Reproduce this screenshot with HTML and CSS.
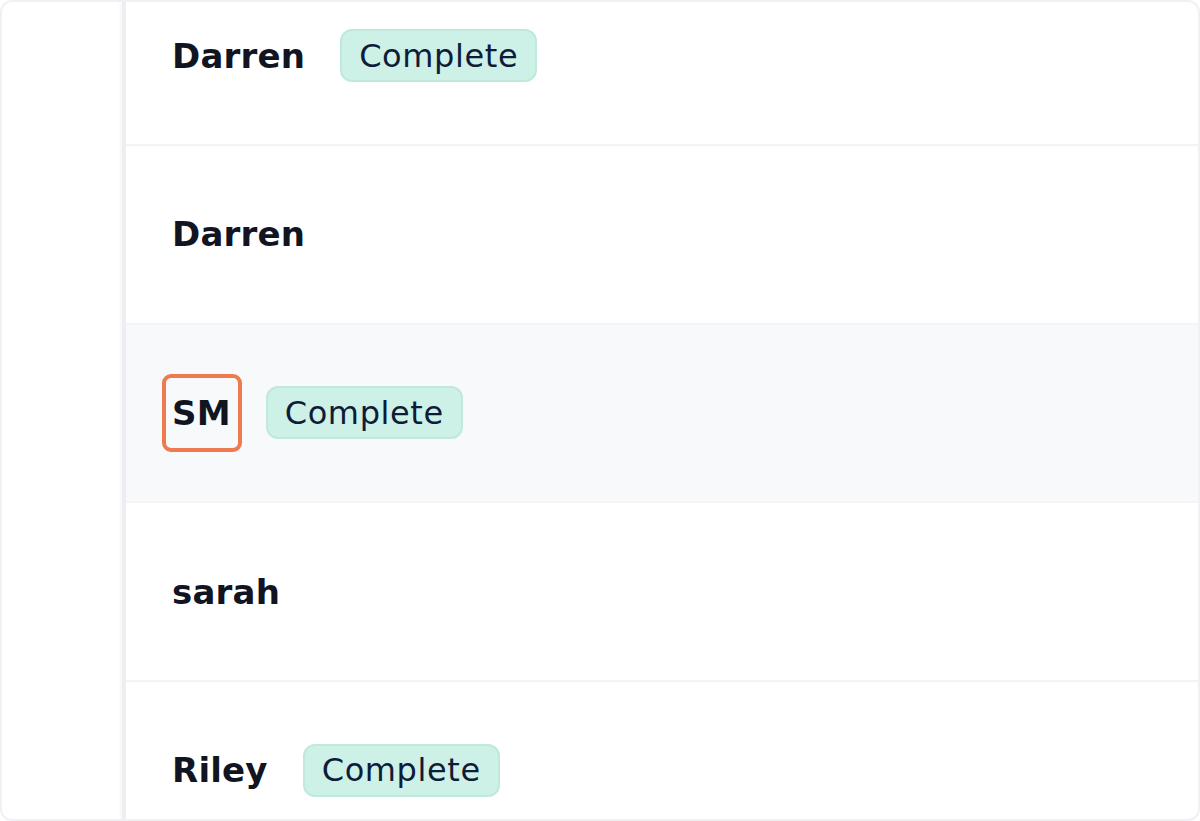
FILE: index.html
```html
<!DOCTYPE html>
<html lang="en">
<head>
<meta charset="utf-8">
<title>Responses</title>
<link rel="stylesheet" href="styles.css">
</head>
<body>
<div class="frame">
  <aside class="side"></aside>
  <main class="panel">
    <div class="rows">
      <div class="row">
        <span class="name">Darren</span>
        <span class="badge">Complete</span>
      </div>
      <div class="row">
        <span class="name">Darren</span>
      </div>
      <div class="row row-active">
        <span class="name name-marked">SM</span>
        <span class="badge">Complete</span>
      </div>
      <div class="row">
        <span class="name">sarah</span>
      </div>
      <div class="row">
        <span class="name">Riley</span>
        <span class="badge">Complete</span>
      </div>
    </div>
  </main>
</div>
</body>
</html>
```

FILE: styles.css
```css
* { box-sizing: border-box; }
html, body { margin: 0; padding: 0; background: #ffffff; }
body { font-family: "DejaVu Sans", "Liberation Sans", sans-serif; }

.frame {
  width: 1200px;
  height: 821px;
  border: 2px solid #f0f0f5;
  border-radius: 12px;
  overflow: hidden;
  display: flex;
  background: #ffffff;
}

.side {
  width: 120px;
  flex: none;
  background: #ffffff;
}

.panel {
  flex: 1;
  border-left: 4px solid #eceef2;
  box-shadow: -2px 0 3px rgba(20, 24, 40, 0.04);
  overflow: hidden;
}

.rows {
  margin-top: -34.67px;
}

.row {
  height: 178.67px;
  border-bottom: 2px solid #f3f4f6;
  display: flex;
  align-items: center;
  gap: 35px;
  padding-left: 46px;
}

.row-active { background: #f8f9fb; }

.name {
  position: relative;
  font-size: 34px;
  font-weight: 700;
  color: #111522;
  line-height: 40px;
  letter-spacing: 0.2px;
}

.name-marked::after {
  content: "";
  position: absolute;
  top: -19px;
  bottom: -19px;
  left: -10px;
  right: -11px;
  border: 4px solid #ee7b50;
  border-radius: 9px;
}

.badge {
  display: inline-flex;
  align-items: center;
  height: 53px;
  padding: 0 17px;
  border: 2px solid #bfe9dc;
  border-radius: 12px;
  background: #cdf1e6;
  color: #0e1c3a;
  font-size: 32px;
  font-weight: 400;
  letter-spacing: 0.6px;
}
```
